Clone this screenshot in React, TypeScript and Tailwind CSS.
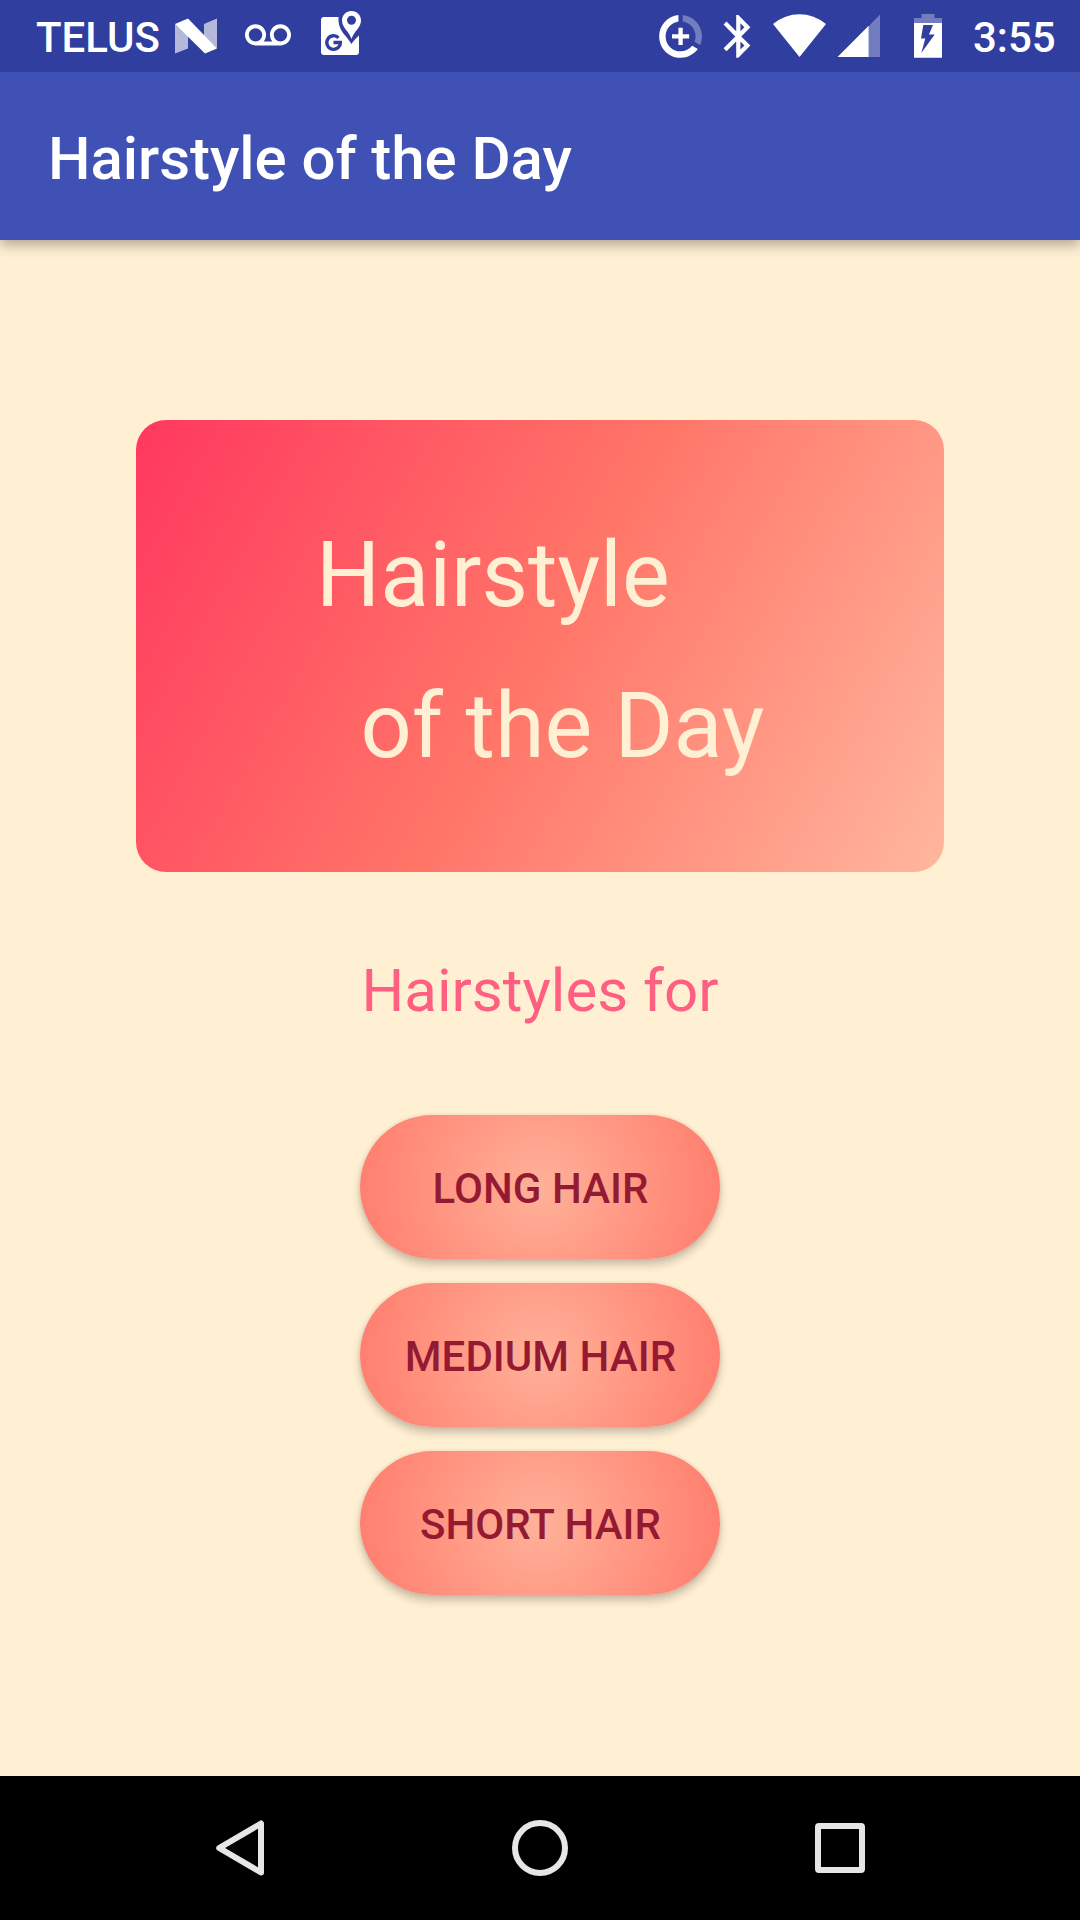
import React from "react";

type IconProps = { x: number; w: number; className: string; children: React.ReactNode };

/** A status bar glyph: a slice of the 72px tall bar. */
function StatusIcon({ x, w, className, children }: IconProps) {
  return (
    <svg viewBox={`${x} 0 ${w} 72`} fill="white" className={`h-[72px] shrink-0 ${className}`}>
      {children}
    </svg>
  );
}

function StatusBar() {
  return (
    <header className="relative z-20 flex h-[72px] w-full items-start justify-between bg-[#303f9f] pl-[36px] text-[42px] leading-[50px] font-medium text-white">
      <div className="flex items-start">
        <span className="w-[139px] shrink-0 pt-[13px] whitespace-nowrap">TELUS</span>
        <StatusIcon x={175} w={42} className="w-[42px]">
          <path opacity=".64" d="M175 24l13 12v12.5l-13 5zM204 24l13-5.5v30l-13-12.500z" />
          <path d="M175 24l13-5.500L217 48.500 205 53.500z" />
        </StatusIcon>
        <StatusIcon x={245} w={46} className="ml-[28px] w-[46px]">
          <path
            transform="translate(245 12.800) scale(1.917)"
            d="M18.5 6C15.46 6 13 8.46 13 11.5c0 1.33.47 2.550 1.260 3.500H9.740c.79-.95 1.260-2.170 1.260-3.500C11 8.460 8.540 6 5.500 6S0 8.460 0 11.500 2.460 17 5.500 17h13c3.040 0 5.500-2.460 5.500-5.500S21.540 6 18.500 6zm-13 9C3.570 15 2 13.430 2 11.500S3.570 8 5.500 8 9 9.570 9 11.500 7.430 15 5.500 15zm13 0c-1.930 0-3.500-1.570-3.500-3.500S16.570 8 18.500 8 22 9.570 22 11.500 20.430 15 18.500 15z"
          />
        </StatusIcon>
        <StatusIcon x={321} w={41} className="ml-[30px] w-[41px]">
          <path d="M324 17h14.500C338 25 341 31 345.500 36c2.500 3 4 5 6 8 1.500-2.500 4-5.500 7.500-8.500V52a3 3 0 0 1-3 3H324a3 3 0 0 1-3-3V20a3 3 0 0 1 3-3z" />
          <path
            fillRule="evenodd"
            d="M351.500 11c-5.300 0-9.500 4.100-9.500 9.300C342 28 349 31 351.500 39 354 31 361 28 361 20.300c0-5.200-4.200-9.300-9.500-9.300zm0 4.800a4.500 4.500 0 1 1 0 9 4.500 4.500 0 0 1 0-9z"
          />
          <path d="M338.500 37.800A6.800 6.800 0 1 0 340.400 42.500H333.500" fill="none" stroke="#303f9f" strokeWidth="3.300" />
        </StatusIcon>
      </div>
      <div className="flex items-start">
        <StatusIcon x={655} w={52} className="w-[52px]">
          <g transform="translate(654.900 10.700) scale(2.140)">
            <path opacity=".32" d="M13 2.050v3.030c3.390.49 6 3.390 6 6.920 0 .9-.18 1.750-.48 2.540l2.600 1.530c.56-1.240.88-2.620.88-4.070 0-5.180-3.950-9.450-9-9.950z" />
            <path d="M12 19c-3.870 0-7-3.130-7-7 0-3.530 2.610-6.430 6-6.920V2.050c-5.060.5-9 4.760-9 9.950 0 5.520 4.470 10 9.990 10 3.310 0 6.240-1.610 8.060-4.090l-2.600-1.530C16.170 17.980 14.210 19 12 19z" />
            <path d="M13 8h-2v3H8v2h3v3h2v-3h3v-2h-3z" />
          </g>
        </StatusIcon>
        <StatusIcon x={723} w={28} className="ml-[16px] w-[28px]">
          <path
            transform="translate(713 10.700) scale(2.110 2.140)"
            d="M17.710 7.710L12 2h-1v7.590L6.410 5 5 6.410 10.590 12 5 17.590 6.410 19 11 14.410V22h1l5.710-5.710-4.300-4.290 4.300-4.290zM13 5.830l1.880 1.880L13 9.590V5.830zm1.880 10.460L13 18.170v-3.760l1.880 1.880z"
          />
        </StatusIcon>
        <StatusIcon x={773} w={53} className="ml-[22px] w-[53px]">
          <path d="M773 24Q785 14.200 799.500 14.200T826 24L799.500 57z" />
        </StatusIcon>
        <StatusIcon x={837} w={43} className="ml-[11px] w-[43px]">
          <path opacity=".32" d="M868.700 26.300L880 14.500V57h-11.300z" />
          <path d="M837.500 57L868.700 25.800V57z" />
        </StatusIcon>
        <StatusIcon x={914} w={28} className="ml-[34px] w-[28px]">
          <path opacity=".32" d="M914 23v-5h7.500v-4h13v4h7.500v5z" />
          <path
            fillRule="evenodd"
            d="M914 23h28v34.700h-28zM923.300 25l-2.300 13.500h4.300L921.300 53 934.700 34.500h-5.700L933 25z"
          />
        </StatusIcon>
        <span className="ml-[31px] w-[107px] shrink-0 pt-[13px] whitespace-nowrap">3:55</span>
      </div>
    </header>
  );
}

function HairButton({ label }: { label: string }) {
  return (
    <button className="flex h-[144px] w-[360px] items-center justify-center rounded-full bg-[radial-gradient(circle_200px_at_center,#ffb199,#ff7a6b)] pt-[3px] pl-px text-[42px] leading-[50px] font-medium tracking-[0.05px] whitespace-nowrap text-[#931a32] shadow-[0_6px_8px_rgba(0,0,0,0.2),0_0_4px_rgba(0,0,0,0.1)]">
      {label}
    </button>
  );
}

export default function App() {
  return (
    <div className="flex h-[1920px] w-[1080px] flex-col overflow-hidden bg-[#ffefd3] font-['Roboto',sans-serif]">
      <StatusBar />
      <div className="z-10 flex h-[168px] shrink-0 items-center bg-[#3f51b5] pt-[5px] pl-[48px] shadow-[0_5px_12px_rgba(0,0,0,0.3)]">
        <h1 className="text-[60px] leading-[70px] font-medium tracking-[-0.06px] whitespace-nowrap text-white">Hairstyle of the Day</h1>
      </div>
      <main className="flex flex-1 flex-col items-center pt-[180px]">
        <section className="flex h-[452px] w-[808px] shrink-0 flex-col rounded-[30px] bg-[linear-gradient(119.2deg,#ff385f,#ff7568_50%,#ffb79e)] pt-[80px] text-[90px] leading-[151px] whitespace-nowrap text-[#ffefd3]">
          <span className="pl-[180px]">Hairstyle</span>
          <span className="pl-[224.5px]">of the Day</span>
        </section>
        <p className="mt-[84px] text-[60px] leading-[70px] whitespace-nowrap text-[#ff5f80]">Hairstyles for</p>
        <div className="mt-[89px] flex flex-col gap-6">
          <HairButton label="LONG HAIR" />
          <HairButton label="MEDIUM HAIR" />
          <HairButton label="SHORT HAIR" />
        </div>
      </main>
      <nav className="flex h-[144px] shrink-0 items-center bg-black pl-[210px]">
        <svg viewBox="210 1816 60 64" className="h-[64px] w-[60px]" fill="none" stroke="#e6e6e6" strokeWidth="6" strokeLinejoin="round">
          <path d="M261 1823.500V1872.500L219.200 1848z" />
        </svg>
        <svg viewBox="508 1816 64 64" className="ml-[238px] h-[64px] w-[64px]" fill="none" stroke="#e6e6e6" strokeWidth="6">
          <circle cx="540" cy="1848" r="25" />
        </svg>
        <svg viewBox="808 1816 64 64" className="ml-[236px] h-[64px] w-[64px]" fill="none" stroke="#e6e6e6" strokeWidth="6">
          <rect x="818" y="1826" width="44" height="44" rx="1" />
        </svg>
      </nav>
    </div>
  );
}
